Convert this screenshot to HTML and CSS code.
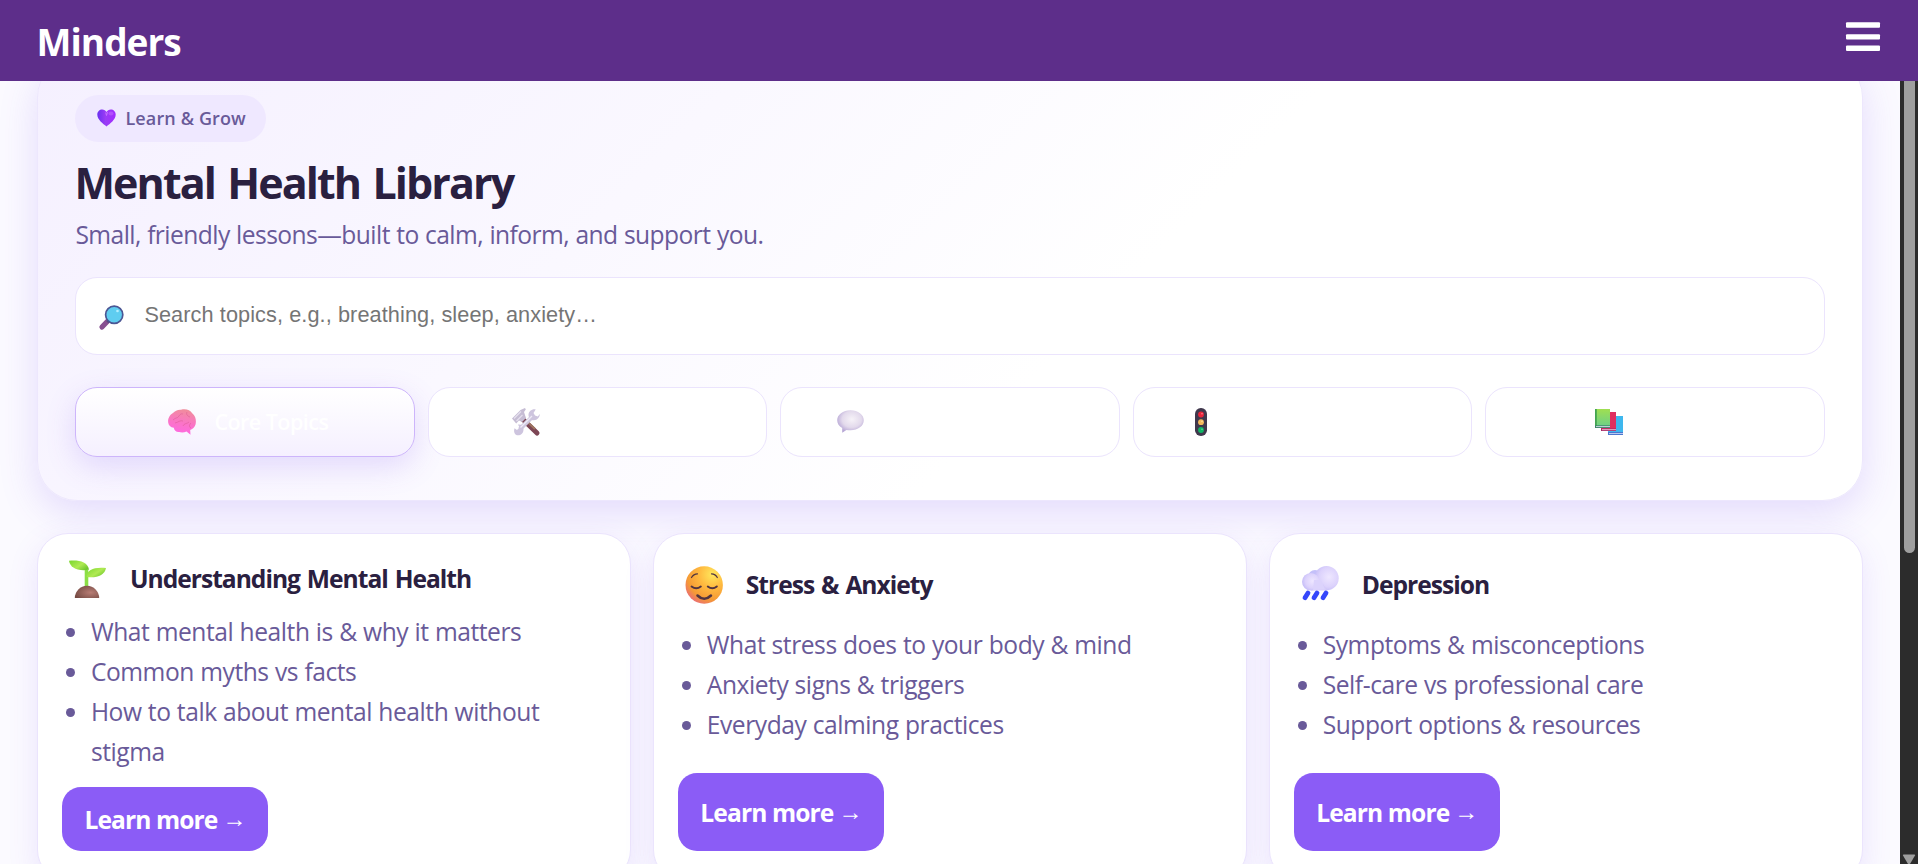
FILE: index.html
```html
<!DOCTYPE html>
<html lang="en">
<head>
<meta charset="utf-8">
<title>Minders</title>
<link rel="stylesheet" href="styles.css">
</head>
<body>
<header class="topbar">
  <div class="brand">Minders</div>
  <svg class="menu" viewBox="0 0 34 30" width="34" height="30"><g fill="#fff"><rect y=".3" width="34" height="5.4" rx="1"/><rect y="12.2" width="34" height="5.4" rx="1"/><rect y="23.6" width="34" height="5.4" rx="1"/></g></svg>
</header>
<div class="viewport">
  <main class="page">
    <section class="hero">
      <div class="badge">
        <svg width="19" height="18" viewBox="0 0 19 18"><defs><linearGradient id="ht" x1="0" x2="1"><stop offset="0" stop-color="#6a2ff0"/><stop offset=".45" stop-color="#9a3cf5"/><stop offset="1" stop-color="#a22cff"/></linearGradient></defs><path d="M9.5 17.5C6 14.8.3 10.800.3 5.600.3 2.400 2.500.4 5.200.4c1.900 0 3.400 1 4.300 2.500C10.400 1.400 11.900.4 13.800.4c2.700 0 4.900 2 4.900 5.200 0 5.200-5.700 9.200-9.200 11.900z" fill="url(#ht)"/><path d="M8.700 3.500l.8 3 1-3.500" stroke="#c774ff" fill="none" stroke-width=".9"/><ellipse cx="14" cy="4.500" rx="2.500" ry="2" fill="#bb5cff" opacity=".7"/></svg>
        <span>Learn &amp; Grow</span>
      </div>
      <h1 class="title">Mental Health Library</h1>
      <p class="subtitle">Small, friendly lessons—built to calm, inform, and support you.</p>
      <div class="search">
        <svg width="25" height="25" viewBox="0 0 25 25"><path d="M8.500 16.200L3 22" stroke="#875090" stroke-width="5.200" stroke-linecap="round"/><path d="M8 15.500l2 2" stroke="#5b4a78" stroke-width="2"/><circle cx="15.200" cy="9.700" r="8.600" fill="#5fcdf0" stroke="#4b5694" stroke-width="1.700"/><circle cx="18.500" cy="6" r="1.300" fill="#b5efff"/></svg>
        <span class="placeholder">Search topics, e.g., breathing, sleep, anxiety…</span>
      </div>
      <nav class="tabs">
        <div class="tab tab--active">
          <svg width="28" height="26" viewBox="0 0 28 26"><defs><linearGradient id="br" x1=".6" y1="0" x2=".4" y2="1"><stop offset="0" stop-color="#f08d9b"/><stop offset=".55" stop-color="#fb74c8"/><stop offset="1" stop-color="#ff68e4"/></linearGradient></defs><path d="M13 .8c5-1.400 9 .4 11.200 3.500 2.600 2 3.800 5 3.700 8.500 0 3.500-1.600 6.300-4.200 7.500l-1.500.7.300 4.800-4-3.400c-2.500 1.400-5.500 1.200-7.400.6-3 .2-4.900-1.500-5.300-4.200C2.500 18.300.5 16.500.2 13.500-.3 9 2 5.500 5 4 7 1.800 9.800.5 13 .8z" fill="url(#br)"/><path d="M5 11c3-3 4-1 6-4s3-2 4-2m-8 9c4-1 5-3 8-2m4-9c-1 2 0 4 3 5m-7 9c1-3 4-2 6-4m2 6c-2-1-2-3 0-5" fill="none" stroke="#d8568f" stroke-width=".8" opacity=".6"/></svg>
          <span>Core Topics</span>
        </div>
        <div class="tab">
          <svg width="28" height="28" viewBox="0 0 28 28"><path d="M11 11.500L25 25" stroke="#7d4655" stroke-width="5" stroke-linecap="round"/><path d="M14 12.500l9 8.500" stroke="#9d7560" stroke-width="2"/><path d="M0 10.500L8.500 2 13 0l.8 1.500-1.800 2.500 2 6-4 4-3-1.500-2.800 3z" fill="#c6bdd4"/><path d="M2 10.500l7-7M4.500 13l6-6" stroke="#e6e0ee" stroke-width="1.200"/><path d="M8 21L21 8" stroke="#cfc8df" stroke-width="4.400"/><path d="M2.500 20.200L5 22l2.500-2.500-1.500-3c3-.5 5.500 1.500 5.500 5 0 3.600-2.600 5.800-5.500 5.800S1.200 24.300 2.500 20.200zM25.800 8.500L23 7.500 21.500 5l2.200-3.500c-3.500-.8-7.200 1.800-7.200 5.400 0 3 2.400 5.300 5.400 5.300 3.500 0 6-3 5.900-6.200z" fill="#cdc4de"/><path d="M8.500 19.500L20 8" stroke="#efebf7" stroke-width="1.300"/></svg>
        </div>
        <div class="tab">
          <svg width="27" height="23" viewBox="0 0 27 23"><defs><radialGradient id="sp" cx=".55" cy=".4" r=".6"><stop offset="0" stop-color="#f6f2f8"/><stop offset=".6" stop-color="#e3daec"/><stop offset="1" stop-color="#b6a6d5"/></radialGradient></defs><path d="M13.500.3C21 .3 26.800 4.700 26.800 10.300S21 20.300 13.500 20.300c-1.500 0-2.700-.1-4-.4L5.200 22.700V18C2 16.200.2 13.500.2 10.300.2 4.700 6 .3 13.500.3z" fill="url(#sp)"/></svg>
        </div>
        <div class="tab">
          <svg width="12" height="28" viewBox="0 0 12 28"><rect width="12" height="28" rx="5.800" fill="#40384d"/><circle cx="6" cy="6.500" r="2.900" fill="#e9253b"/><circle cx="6" cy="14.200" r="2.900" fill="#f5b95a"/><circle cx="6" cy="22" r="2.900" fill="#0fb565"/><circle cx="7" cy="5.700" r=".8" fill="#ff8593"/><circle cx="7" cy="13.400" r=".8" fill="#ffdf9c"/><circle cx="7" cy="21.200" r=".8" fill="#65dda0"/></svg>
        </div>
        <div class="tab">
          <svg width="28" height="26" viewBox="0 0 28 26"><defs><linearGradient id="bk" x2="0" y2="1"><stop offset="0" stop-color="#a0df51"/><stop offset="1" stop-color="#68ce8c"/></linearGradient></defs><rect x="13" y="7" width="15" height="19" fill="#3eb7ee"/><path d="M13 23h15v3H13z" fill="#4c77cf"/><path d="M14 24.500h14" stroke="#c4d2f6" stroke-width=".9"/><path d="M6 3h15v19H6z" fill="#e02f60"/><path d="M6 19.500h15V22H6z" fill="#a72766"/><path d="M7 20.700h14" stroke="#f1cbdc" stroke-width=".9"/><rect width="15" height="19" fill="url(#bk)"/><path d="M0 0h1.800v17H0z" fill="#43a451"/><path d="M0 16.300h15V19H0z" fill="#3c8469"/><path d="M1 17.600h14" stroke="#dae2ed" stroke-width=".9"/></svg>
        </div>
      </nav>
    </section>
    <section class="cards">
      <article class="card">
        <div class="card-head">
          <svg width="51" height="38" viewBox="0 0 51 38"><defs><linearGradient id="lf" x2="1" y2=".7"><stop offset="0" stop-color="#78d62d"/><stop offset=".6" stop-color="#b0ea53"/><stop offset="1" stop-color="#70c72e"/></linearGradient><radialGradient id="so" cx=".65" cy=".55" r=".7"><stop offset="0" stop-color="#b87d75"/><stop offset="1" stop-color="#754a43"/></radialGradient></defs><path d="M24.500 10v16" stroke="#8bdf46" stroke-width="3.600"/><path d="M7 .8C15-.4 26 1.200 27 9.800 15 11.500 8 7.500 7 .8z" fill="url(#lf)"/><path d="M24.500 17C25 9.500 32 7 44 8 43 15 34.500 18.500 24.500 17z" fill="url(#lf)"/><path d="M12.800 38a12.200 12.200 0 0 1 24.400 0z" fill="url(#so)"/></svg>
          <h2>Understanding Mental Health</h2>
        </div>
        <ul>
          <li>What mental health is &amp; why it matters</li>
          <li>Common myths vs facts</li>
          <li>How to talk about mental health without stigma</li>
        </ul>
        <a class="more">Learn more <span>→</span></a>
      </article>
      <article class="card card--roomy">
        <div class="card-head">
          <svg width="51" height="38" viewBox="0 0 51 38"><defs><radialGradient id="fc" cx=".72" cy=".22" r=".9"><stop offset="0" stop-color="#ffe75c"/><stop offset=".4" stop-color="#ffb93f"/><stop offset=".75" stop-color="#f59a35"/><stop offset="1" stop-color="#e96680"/></radialGradient></defs><circle cx="26.200" cy="19" r="18.700" fill="url(#fc)"/><g fill="none" stroke="#513440" stroke-linecap="round"><path d="M13.500 11.500q2-3.400 6-3.600M33.500 7.900q4 .2 5.800 3.600" stroke-width="1.200"/><path d="M13.600 20.500q4.700 3.600 9.200 0M29.800 20.500q4.600 3.600 9 0" stroke-width="2"/><path d="M19.500 29.500q6.700 6.600 13.500 0" stroke-width="2.500"/></g></svg>
          <h2>Stress &amp; Anxiety</h2>
        </div>
        <ul>
          <li>What stress does to your body &amp; mind</li>
          <li>Anxiety signs &amp; triggers</li>
          <li>Everyday calming practices</li>
        </ul>
        <a class="more">Learn more <span>→</span></a>
      </article>
      <article class="card card--roomy">
        <div class="card-head">
          <svg width="51" height="38" viewBox="0 0 51 38"><defs><radialGradient id="cl" cx=".6" cy=".45" r=".62"><stop offset="0" stop-color="#eee7ff"/><stop offset=".65" stop-color="#dcd2fc"/><stop offset="1" stop-color="#c3bbf7"/></radialGradient></defs><circle cx="21" cy="11" r="7" fill="#c4c0fa"/><circle cx="32.500" cy="12.200" r="12.200" fill="url(#cl)"/><path d="M17 18h12l4 6.400H17z" fill="#d6ccfa"/><circle cx="16.800" cy="15.800" r="8.800" fill="url(#cl)"/><path d="M20 14h7l4 9.500-12 .5z" fill="#dcd3fc"/><g stroke="#3547fb" stroke-width="4.800" stroke-linecap="round"><path d="M14 27l-3 4.800M23 27l-3 4.800M32 27l-3 4.800"/></g></svg>
          <h2>Depression</h2>
        </div>
        <ul>
          <li>Symptoms &amp; misconceptions</li>
          <li>Self-care vs professional care</li>
          <li>Support options &amp; resources</li>
        </ul>
        <a class="more">Learn more <span>→</span></a>
      </article>
    </section>
  </main>
  <div class="scrollbar">
    <div class="thumb"></div>
    <svg width="14" height="10" viewBox="0 0 14 10"><path d="M1.500.5h11q1 0 .5 1L8.300 9.400q-1.300 1-2.600 0L1 1.500q-.5-1 .5-1z" fill="#9f9f9f"/></svg>
  </div>
</div>
</body>
</html>
```
FILE: styles.css
```css
* { box-sizing: border-box; }
body {
  margin: 0;
  height: 864px;
  overflow: hidden;
  display: flex;
  flex-direction: column;
  font-family: "Open Sans", "Noto Sans", sans-serif;
  color: #695a99;
  background: #fbfaff;
}
h1, h2, p, ul { margin: 0; padding: 0; }
svg { display: block; flex: none; overflow: visible; }

.topbar {
  flex: none;
  height: 81px;
  padding: 1px 38px 0 36.500px;
  display: flex;
  justify-content: space-between;
  background: #5d2e8a;
  position: relative;
  z-index: 1;
}
.brand {
  color: #fff;
  font-size: 37px;
  font-weight: 700;
  letter-spacing: -.95px;
  line-height: 81px;
}
.menu { margin-top: 21px; }

.viewport { flex: 1; min-height: 0; display: flex; }
.page {
  flex: 1;
  min-width: 0;
  overflow: hidden;
  padding: 0 37.400px;
}
.hero {
  height: 444px;
  margin-top: -24px;
  padding: 37px;
  border: 1px solid #ede7fd;
  border-radius: 40px;
  background: linear-gradient(135deg, #f5f0ff 0%, #faf8ff 32%, #fff 58%);
  box-shadow: 0 12px 38px rgba(124, 77, 237, .18);
}
.badge {
  width: 191px;
  height: 47px;
  padding: 0 0 1px 21.500px;
  display: flex;
  align-items: center;
  gap: 9.500px;
  border-radius: 24px;
  background: #efe8ff;
  font-size: 18px;
  font-weight: 600;
  letter-spacing: .13px;
  white-space: nowrap;
}
.title {
  margin-top: 13px;
  color: #2a2040;
  font-size: 43px;
  font-weight: 700;
  letter-spacing: -1.9px;
  word-spacing: 3px;
  line-height: 55px;
  text-indent: -1px;
}
.subtitle {
  margin-top: 4.500px;
  font-size: 24.600px;
  letter-spacing: -.55px;
  word-spacing: .500px;
  line-height: 40px;
}
.search {
  height: 77.500px;
  margin-top: 22.500px;
  padding: 3px 23px 0;
  display: flex;
  align-items: center;
  gap: 20px;
  border: 1px solid #ebe4fd;
  border-radius: 22px;
  background: #fff;
}
.placeholder {
  margin-top: -5px;
  color: #757575;
  font: 21.700px "Liberation Sans", Arial, sans-serif;
  letter-spacing: .09px;
}
.tabs {
  margin-top: 32px;
  display: grid;
  grid-template-columns: repeat(5, 1fr);
  gap: 12.800px;
}
.tab {
  height: 70px;
  display: flex;
  align-items: center;
  gap: 18px;
  border: 1px solid #ebe4fd;
  border-radius: 22px;
  background: #fff;
  color: #fff;
  font-size: 21.500px;
  font-weight: 600;
  letter-spacing: -.53px;
}
.tab--active {
  border-color: #cdb5fb;
  background: linear-gradient(#fff, #f5f0ff);
  box-shadow: 0 10px 30px rgba(124, 77, 237, .18);
}
.tab:nth-child(1) { padding-left: 92px; }
.tab:nth-child(2) { padding-left: 83.500px; }
.tab:nth-child(3) { padding-left: 56px; }
.tab:nth-child(4) { padding-left: 61px; }
.tab:nth-child(5) { padding-left: 109px; }

.cards {
  margin-top: 32px;
  display: grid;
  grid-template-columns: repeat(3, 1fr);
  gap: 22.500px;
}
.card {
  height: 348px;
  padding: 24px;
  border: 1px solid #ebe4fd;
  border-radius: 31px;
  background: #fff;
  box-shadow: 0 10px 30px rgba(124, 77, 237, .13);
}
.card-head {
  height: 42px;
  display: flex;
  align-items: center;
  gap: 16.500px;
}
.card-head h2 {
  color: #2a2040;
  font-size: 24.600px;
  font-weight: 700;
  letter-spacing: -1px;
  word-spacing: 1.500px;
  line-height: 40px;
}
.card ul {
  margin-top: 12px;
  list-style: none;
  font-size: 24.600px;
  letter-spacing: -.45px;
  word-spacing: .400px;
  line-height: 40px;
}
.card li { position: relative; padding: 0 60px 0 28.500px; }
.card li::before {
  content: "";
  position: absolute;
  left: 3.500px;
  top: 15.500px;
  width: 9px;
  height: 9px;
  border-radius: 50%;
  background: #695a99;
}
.more {
  width: 206px;
  height: 64px;
  margin-top: 15px;
  padding-left: 22px;
  display: flex;
  align-items: center;
  gap: 5px;
  border-radius: 19px;
  background: #8b5cf6;
  color: #fff;
  font-size: 24.600px;
  font-weight: 700;
  letter-spacing: -.9px;
}
.more span {
  font: 24px/30px "Liberation Sans", sans-serif;
}
.card--roomy .card-head { height: 53px; }
.card--roomy ul { margin-top: 14px; }
.card--roomy .more { height: 78px; margin-top: 28px; }

.scrollbar {
  flex: none;
  width: 18px;
  display: flex;
  flex-direction: column;
  align-items: center;
  justify-content: space-between;
  background: #2c2c2c;
}
.thumb {
  width: 11px;
  height: 472px;
  border-radius: 0 0 6px 6px;
  background: #9f9f9f;
}
```
